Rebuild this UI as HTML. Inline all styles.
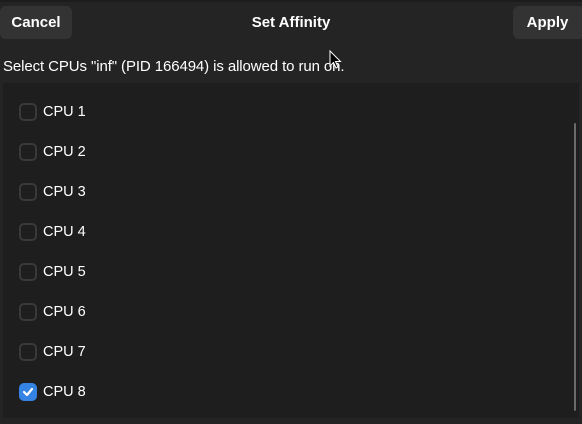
<!DOCTYPE html>
<html><head><style>
body{margin:0;width:582px;height:424px;background:#242424;font-family:"Liberation Sans",sans-serif;color:#fff;position:relative;overflow:hidden}
.top{position:absolute;left:0;top:0;width:582px;height:2px;background:#1c1c1c}
.btn{position:absolute;top:6px;height:33px;background:#333;border-radius:6px;font-weight:bold;font-size:15px;line-height:33px;text-align:center}
.title{position:absolute;left:0;width:582px;top:6px;line-height:33px;text-align:center;font-weight:bold;font-size:15px}
.sub{position:absolute;left:3px;top:58px;font-size:15px;letter-spacing:-0.1px}
.list{position:absolute;left:3px;top:83px;width:576px;height:335px;background:#1e1e1e}
.row{position:absolute;left:16px;height:20px;font-size:14.5px;line-height:18px}
.cb{position:absolute;left:0;top:0;width:14px;height:14px;border:2px solid #3a3a3a;border-radius:5px}
.cb.on{background:#3584e4;border-color:#3584e4}
.row span{position:absolute;left:24px;top:0;white-space:nowrap}
.sb{position:absolute;left:571px;top:40px;width:2px;height:288px;background:#6a6a6a;border-radius:1px}
</style></head><body>
<div class="top"></div>
<div class="btn" style="left:0;width:72px">Cancel</div>
<div class="title">Set Affinity</div>
<div class="btn" style="left:513px;width:72px;padding-right:3px;box-sizing:border-box">Apply</div>
<div class="sub">Select CPUs "inf" (PID 166494) is allowed to run on.</div>
<svg style="position:absolute;left:329px;top:50px" width="14" height="22" viewBox="0 0 14 22"><path d="M1 1 L1 16 L4.5 12.5 L7 18 L9 17 L6.5 11.5 L11.5 11.5 Z" fill="#000" stroke="#fff" stroke-width="1"/></svg>
<div class="list">
<div class="row" style="top:20px"><div class="cb"></div><span>CPU 1</span></div>
<div class="row" style="top:60px"><div class="cb"></div><span>CPU 2</span></div>
<div class="row" style="top:100px"><div class="cb"></div><span>CPU 3</span></div>
<div class="row" style="top:140px"><div class="cb"></div><span>CPU 4</span></div>
<div class="row" style="top:180px"><div class="cb"></div><span>CPU 5</span></div>
<div class="row" style="top:220px"><div class="cb"></div><span>CPU 6</span></div>
<div class="row" style="top:260px"><div class="cb"></div><span>CPU 7</span></div>
<div class="row" style="top:300px"><div class="cb on"><svg width="14" height="14" viewBox="0 0 14 14" style="position:absolute;left:0;top:0"><path d="M3 7 L6 10 L11 4" fill="none" stroke="#fff" stroke-width="2.2" stroke-linecap="round" stroke-linejoin="round"/></svg></div><span>CPU 8</span></div>
<div class="sb"></div>
</div>
</body></html>
